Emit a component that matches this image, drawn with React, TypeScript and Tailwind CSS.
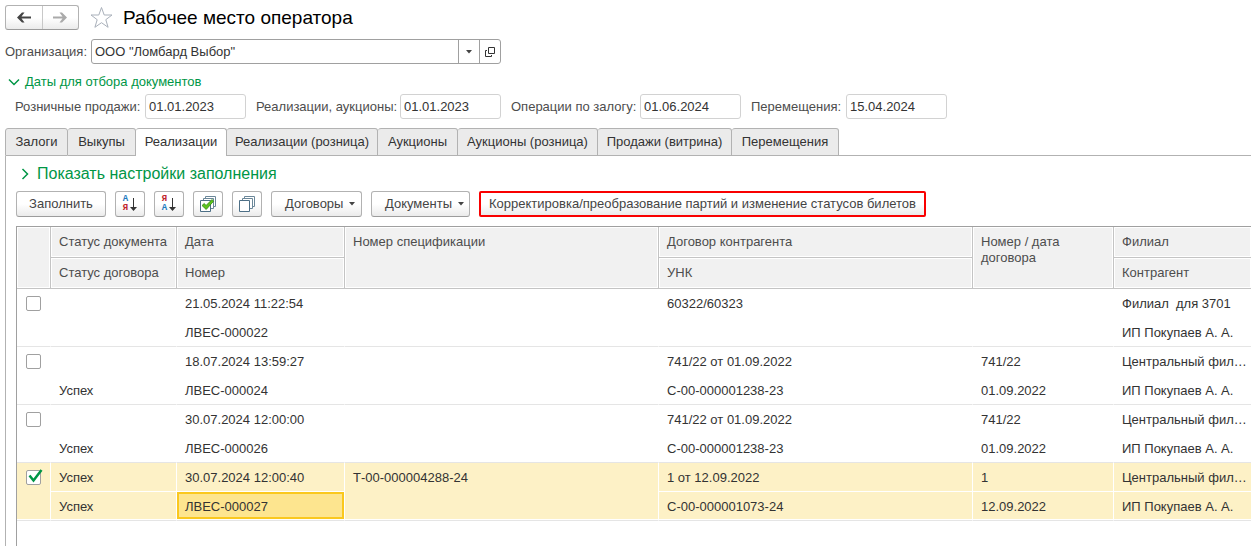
import { ReactNode, useState } from "react";

interface Doc {
  docStatus: string;
  contractStatus: string;
  date: string;
  number: string;
  spec: string;
  contract: string;
  unk: string;
  contractNumber: string;
  contractDate: string;
  branch: string;
  partner: string;
}

const docs: Doc[] = [
  {
    docStatus: "",
    contractStatus: "",
    date: "21.05.2024 11:22:54",
    number: "ЛВЕС-000022",
    spec: "",
    contract: "60322/60323",
    unk: "",
    contractNumber: "",
    contractDate: "",
    branch: "Филиал  для 3701",
    partner: "ИП Покупаев А. А.",
  },
  {
    docStatus: "",
    contractStatus: "Успех",
    date: "18.07.2024 13:59:27",
    number: "ЛВЕС-000024",
    spec: "",
    contract: "741/22 от 01.09.2022",
    unk: "С-00-000001238-23",
    contractNumber: "741/22",
    contractDate: "01.09.2022",
    branch: "Центральный фил…",
    partner: "ИП Покупаев А. А.",
  },
  {
    docStatus: "",
    contractStatus: "Успех",
    date: "30.07.2024 12:00:00",
    number: "ЛВЕС-000026",
    spec: "",
    contract: "741/22 от 01.09.2022",
    unk: "С-00-000001238-23",
    contractNumber: "741/22",
    contractDate: "01.09.2022",
    branch: "Центральный фил…",
    partner: "ИП Покупаев А. А.",
  },
  {
    docStatus: "Успех",
    contractStatus: "Успех",
    date: "30.07.2024 12:00:40",
    number: "ЛВЕС-000027",
    spec: "Т-00-000004288-24",
    contract: "1 от 12.09.2022",
    unk: "С-00-000001073-24",
    contractNumber: "1",
    contractDate: "12.09.2022",
    branch: "Центральный фил…",
    partner: "ИП Покупаев А. А.",
  },
];

const dates = [
  {
    id: "retail",
    label: "Розничные продажи:",
    value: "01.01.2023",
    width: "w-[130px]",
  },
  {
    id: "auctions",
    label: "Реализации, аукционы:",
    value: "01.01.2023",
    width: "w-[144px]",
  },
  {
    id: "pledges",
    label: "Операции по залогу:",
    value: "01.06.2024",
    width: "w-[129px]",
  },
  {
    id: "moves",
    label: "Перемещения:",
    value: "15.04.2024",
    width: "w-[95px]",
  },
];

const tabs = [
  { name: "Залоги", width: "w-[63px]" },
  { name: "Выкупы", width: "w-[68px]" },
  { name: "Реализации", width: "w-[91px]" },
  { name: "Реализации (розница)", width: "w-[151px]" },
  { name: "Аукционы", width: "w-[80px]" },
  { name: "Аукционы (розница)", width: "w-[140px]" },
  { name: "Продажи (витрина)", width: "w-[134px]" },
  { name: "Перемещения", width: "w-[107px]" },
];

const buttonStyle =
  "flex h-[26px] shrink-0 items-center rounded-[3px] border border-[#b2b2b2] border-b-[#9c9c9c] bg-linear-to-b from-white from-50% to-[#ebebeb] whitespace-nowrap text-[#444]";

const Caret = () => (
  <svg width="6" height="4" viewBox="0 0 6 4" fill="#444">
    <path d="M0 0h6L3 3.500z" />
  </svg>
);

const Arrow = ({ color, back }: { color: string; back?: boolean }) => (
  <svg width="14" height="11" viewBox="0 0 14 11" fill={color}>
    {back ? (
      <path d="M0 5.500 5 .5h2.500L4.500 4.500H14v2H4.500l3 4H5z" />
    ) : (
      <path d="M14 5.500 9 .5H6.500l3 4H0v2h9.500l-3 4H9z" />
    )}
  </svg>
);

const SortIcon = ({ reverse }: { reverse?: boolean }) => (
  <span className="flex items-center gap-[2px]">
    <span className="flex flex-col font-['Liberation_Mono',monospace] text-[9px] leading-[9px] font-bold">
      <span className={reverse ? "text-[#c1272d]" : "text-[#1f7ac0]"}>
        {reverse ? "Я" : "А"}
      </span>
      <span className={reverse ? "text-[#1f7ac0]" : "text-[#c1272d]"}>
        {reverse ? "А" : "Я"}
      </span>
    </span>
    <svg width="7" height="14" viewBox="0 0 7 14" fill="#333">
      <path d="M3 1h1v9h3L3.500 14 0 10h3z" />
    </svg>
  </span>
);

const PagesIcon = ({ checked }: { checked?: boolean }) => (
  <svg width="16" height="16" viewBox="0 0 16 16" fill="#fff" stroke="#6b8799">
    <path d="M5.500.5h10v10h-10z" />
    <path d="M3.500 2.500h10v10h-10z" />
    <path d="M.5 4.500h10v11H.5z" stroke="#4d6f86" />
    {checked && (
      <path
        d="M2 9.500 4.300 7.500 6 9.500 12 3.500l1.500 1.800L6.200 13.500z"
        fill="#5cc31c"
        stroke="#2f8a10"
        strokeWidth=".8"
      />
    )}
  </svg>
);

interface CellProps {
  children?: ReactNode;
  selected: boolean;
  last?: boolean;
  tall?: boolean;
  active?: boolean;
}

const Cell = ({ children, selected, last, tall, active }: CellProps) => {
  const closing = last || tall;
  const bottom = closing ? "border-b-[#e5e5e5]" : "border-b-white";
  const fill = selected ? "bg-[#fdf1c6]" : "bg-white";
  const shadow = closing ? "shadow-[inset_0_-1px_0_white]" : "";

  return (
    <td
      rowSpan={tall ? 2 : 1}
      className={`h-[29px] border-r border-b border-r-white p-0 align-top last:border-r-0 ${bottom} ${fill} ${shadow}`}
    >
      <div
        className={`whitespace-pre ${active ? "h-[27px] border-2 border-[#fac81e] bg-[#fde58f] px-[6px] leading-[25px]" : "h-7 pl-2 leading-[29px]"}`}
      >
        {children}
      </div>
    </td>
  );
};

const HeadCell = ({
  children,
  tall,
  end,
}: {
  children?: ReactNode;
  tall?: boolean;
  end?: boolean;
}) => (
  <th
    rowSpan={tall ? 2 : 1}
    className={`h-[31px] border-b border-[#c4c4c4] bg-[#f1f1f1] py-[7px] pl-2 text-left align-top leading-4 font-normal text-[#4d4d4d] shadow-[inset_0_0_0_1px_white] ${end ? "" : "border-r"}`}
  >
    {children}
  </th>
);

const App = () => {
  const [activeTab, setActiveTab] = useState("Реализации");
  const [checked, setChecked] = useState<number[]>([3]);

  const toggle = (index: number) => {
    setChecked(
      checked.includes(index)
        ? checked.filter((v) => v !== index)
        : [...checked, index],
    );
  };

  return (
    <div className="flex min-h-screen flex-col overflow-hidden bg-white pt-[5px] pl-[5px] font-['Liberation_Sans',Arial,sans-serif] text-[13px] leading-4 text-[#333]">
      {/* title */}
      <header className="flex h-[25px] items-center">
        <div className="flex h-[25px] w-[74px] rounded-[3px] border border-[#b2b2b2] border-b-[#9c9c9c] bg-linear-to-b from-white from-50% to-[#ebebeb]">
          <button
            aria-label="Назад"
            className="flex flex-1 items-center justify-center border-r border-[#c8c8c8]"
          >
            <Arrow color="#444" back />
          </button>
          <button
            aria-label="Вперед"
            className="flex flex-1 items-center justify-center"
          >
            <Arrow color="#aaa" />
          </button>
        </div>
        <button aria-label="В избранное" className="ml-[11px]">
          <svg
            width="23"
            height="23"
            viewBox="0 0 23 23"
            fill="#fff"
            stroke="#a9b0ba"
          >
            <path d="M11.500 1.500 14.200 9h7.800l-6.200 4.700 2.300 7.600-6.600-4.600-6.600 4.600 2.300-7.600L1 9h7.800z" />
          </svg>
        </button>
        <h1 className="ml-[10px] text-[19px] leading-6 text-black">
          Рабочее место оператора
        </h1>
      </header>

      {/* organization */}
      <div className="mt-[9px] flex items-center">
        <label htmlFor="org" className="w-[86px] text-[#4d4d4d]">
          Организация:
        </label>
        <div className="flex h-[25px] w-[410px] rounded-[3px] border border-[#a0a0a0]">
          <input
            id="org"
            defaultValue={'ООО "Ломбард Выбор"'}
            className="min-w-0 flex-1 px-[3px] outline-none"
          />
          <button
            aria-label="Выбрать"
            className="flex w-[21px] items-center justify-center border-l border-[#a0a0a0]"
          >
            <Caret />
          </button>
          <button
            aria-label="Открыть"
            className="flex w-[21px] items-center justify-center border-l border-[#a0a0a0]"
          >
            <svg
              width="10"
              height="10"
              viewBox="0 0 10 10"
              fill="none"
              stroke="#333"
            >
              <path d="M3.500.5h6v6h-6zM2 3.500H.5v6h6V8" />
            </svg>
          </button>
        </div>
      </div>

      {/* dates */}
      <button className="mt-[10px] flex items-center self-start text-[#009646]">
        <svg
          width="12"
          height="8"
          viewBox="0 0 12 8"
          fill="none"
          stroke="#009646"
          strokeWidth="1.500"
          className="ml-[3px]"
        >
          <path d="m1 1.500 5 5 5-5" />
        </svg>
        <span className="ml-[5px]">Даты для отбора документов</span>
      </button>
      <div className="mt-1 ml-[10px] flex gap-[10px]">
        {dates.map((d) => (
          <div key={d.id} className="flex items-center">
            <label
              htmlFor={d.id}
              className={`shrink-0 whitespace-nowrap text-[#4d4d4d] ${d.width}`}
            >
              {d.label}
            </label>
            <input
              id={d.id}
              defaultValue={d.value}
              className="h-[25px] w-[101px] rounded-[3px] border border-[#d2d2d2] px-[3px] outline-none"
            />
          </div>
        ))}
      </div>

      {/* tabs */}
      <div role="tablist" className="mt-[9px] flex">
        {tabs.map(({ name, width }) => (
          <button
            key={name}
            role="tab"
            aria-selected={name === activeTab}
            onClick={() => setActiveTab(name)}
            className={`flex h-7 shrink-0 items-center justify-center rounded-t-[3px] border-t border-r border-[#b2b2b2] whitespace-nowrap first:border-l ${width} ${name === activeTab ? "bg-white pb-px" : "border-b bg-[#ebebeb]"}`}
          >
            {name}
          </button>
        ))}
        <div className="flex-1 border-b border-[#b2b2b2]" />
      </div>

      <main className="flex flex-1 flex-col border-l border-[#b2b2b2] pt-2 pl-[10px]">
        <button className="flex h-5 items-center self-start text-base text-[#009646]">
          <svg
            width="8"
            height="12"
            viewBox="0 0 8 12"
            fill="none"
            stroke="#009646"
            strokeWidth="1.500"
            className="ml-[5px]"
          >
            <path d="m1.500 1 5 5-5 5" />
          </svg>
          <span className="ml-2">Показать настройки заполнения</span>
        </button>

        <div className="mt-[7px] flex gap-[9px]">
          <button className={`${buttonStyle} w-[90px] justify-center`}>
            Заполнить
          </button>
          <button
            aria-label="По возрастанию"
            className={`${buttonStyle} w-[30px] justify-center`}
          >
            <SortIcon />
          </button>
          <button
            aria-label="По убыванию"
            className={`${buttonStyle} w-[30px] justify-center`}
          >
            <SortIcon reverse />
          </button>
          <button
            aria-label="Отметить все"
            className={`${buttonStyle} w-[30px] justify-center`}
          >
            <PagesIcon checked />
          </button>
          <button
            aria-label="Снять отметки"
            className={`${buttonStyle} w-[30px] justify-center`}
          >
            <PagesIcon />
          </button>
          <button className={`${buttonStyle} w-[91px] gap-[6px] pl-[13px]`}>
            Договоры <Caret />
          </button>
          <button className={`${buttonStyle} w-[99px] gap-[6px] pl-[13px]`}>
            Документы <Caret />
          </button>
          <button className="flex h-[26px] w-[447px] shrink-0 items-center justify-center rounded-[2px] border-2 border-[#f90000] bg-linear-to-b from-white from-50% to-[#ebebeb] whitespace-nowrap text-[#444]">
            Корректировка/преобразование партий и изменение статусов билетов
          </button>
        </div>

        {/* documents */}
        <div className="mt-[9px] flex-1 border-t border-l border-[#a0a0a0]">
          <table className="w-full table-fixed border-separate border-spacing-0">
            <colgroup>
              <col className="w-[34px]" />
              <col className="w-[126px]" />
              <col className="w-[168px]" />
              <col className="w-[314px]" />
              <col className="w-[314px]" />
              <col className="w-[141px]" />
              <col />
            </colgroup>
            <thead>
              <tr>
                <HeadCell tall />
                <HeadCell>Статус документа</HeadCell>
                <HeadCell>Дата</HeadCell>
                <HeadCell tall>Номер спецификации</HeadCell>
                <HeadCell>Договор контрагента</HeadCell>
                <HeadCell tall>
                  Номер / дата
                  <br />
                  договора
                </HeadCell>
                <HeadCell end>Филиал</HeadCell>
              </tr>
              <tr>
                <HeadCell>Статус договора</HeadCell>
                <HeadCell>Номер</HeadCell>
                <HeadCell>УНК</HeadCell>
                <HeadCell end>Контрагент</HeadCell>
              </tr>
            </thead>
            {docs.map((doc, i) => {
              const selected = i === 3;
              return (
                <tbody key={doc.number}>
                  <tr>
                    <Cell selected={selected} tall>
                      <input
                        type="checkbox"
                        aria-label={doc.number}
                        checked={checked.includes(i)}
                        onChange={() => toggle(i)}
                        className="peer sr-only"
                      />
                      <svg
                        width="17"
                        height="17"
                        viewBox="0 0 17 17"
                        className="mt-[6px] ml-px"
                        onClick={() => toggle(i)}
                      >
                        <rect
                          x=".5"
                          y="1.500"
                          width="14"
                          height="14"
                          rx="1.500"
                          fill="#fff"
                          stroke="#a0a0a0"
                        />
                        {checked.includes(i) && (
                          <path
                            d="m3.500 6.500 4 5L15.500 1"
                            fill="none"
                            stroke="#009646"
                            strokeWidth="2.500"
                          />
                        )}
                      </svg>
                    </Cell>
                    <Cell selected={selected}>{doc.docStatus}</Cell>
                    <Cell selected={selected}>{doc.date}</Cell>
                    <Cell selected={selected} tall>
                      {doc.spec}
                    </Cell>
                    <Cell selected={selected}>{doc.contract}</Cell>
                    <Cell selected={selected}>{doc.contractNumber}</Cell>
                    <Cell selected={selected}>{doc.branch}</Cell>
                  </tr>
                  <tr>
                    <Cell selected={selected} last>
                      {doc.contractStatus}
                    </Cell>
                    <Cell selected={selected} last active={selected}>
                      {doc.number}
                    </Cell>
                    <Cell selected={selected} last>
                      {doc.unk}
                    </Cell>
                    <Cell selected={selected} last>
                      {doc.contractDate}
                    </Cell>
                    <Cell selected={selected} last>
                      {doc.partner}
                    </Cell>
                  </tr>
                </tbody>
              );
            })}
          </table>
        </div>
      </main>
    </div>
  );
};

export default App;
